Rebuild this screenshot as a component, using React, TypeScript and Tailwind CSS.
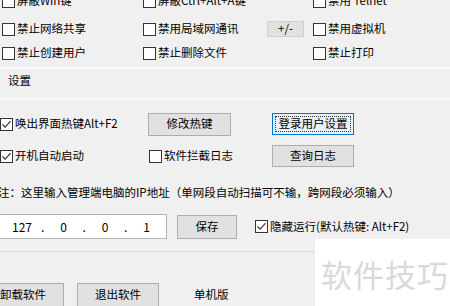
import React from "react";

function Box({ checked }: { checked?: boolean }) {
  return (
    <span className="w-[13px] h-[13px] shrink-0 border border-[#333] bg-white flex items-center justify-center">
      {checked && (
        <svg width="11" height="11" viewBox="0 0 11 11">
          <path d="M1.5 5.5 L4.2 8.2 L9.5 2.2" fill="none" stroke="#333" strokeWidth="1.2" />
        </svg>
      )}
    </span>
  );
}

function Check({ label, checked, className = "" }: { label: string; checked?: boolean; className?: string }) {
  return (
    <div className={"flex items-center gap-[2px] whitespace-nowrap " + className}>
      <Box checked={checked} />
      <span>{label}</span>
    </div>
  );
}

function Btn({ label, className = "" }: { label: string; className?: string }) {
  return (
    <div className={"flex items-center justify-center bg-[#e1e1e1] border border-[#adadad] shrink-0 " + className}>
      {label}
    </div>
  );
}

export default function App() {
  return (
    <div
      className="relative w-[450px] h-[306px] overflow-hidden bg-[#f0f0f0] text-black text-[11.5px] leading-none"
      style={{ fontFamily: '"Noto Sans CJK SC", "Noto Sans", sans-serif' }}
    >
      {/* 选项 */}
      <div className="flex h-[24px] items-center mt-[-11px] pl-[2px]">
        <Check label="屏蔽Win键" className="w-[141px]" />
        <Check label="屏蔽Ctrl+Alt+A键" className="w-[170px]" />
        <Check label="禁用 Telnet" />
      </div>
      <div className="flex h-[24px] items-center mt-[4px] pl-[2px]">
        <Check label="禁止网络共享" className="w-[141px]" />
        <Check label="禁用局域网通讯" className="w-[124px]" />
        <Btn label="+/-" className="w-[37px] h-[16px] border-[#d0d0d0]" />
        <Check label="禁用虚拟机" className="ml-[9px]" />
      </div>
      <div className="flex h-[24px] items-center pl-[2px]">
        <Check label="禁止创建用户" className="w-[141px]" />
        <Check label="禁止删除文件" className="w-[170px]" />
        <Check label="禁止打印" />
      </div>
      <div className="mt-[2px] h-[2px] bg-[#fafafa]" />

      {/* 设置 */}
      <div className="h-[24px] flex items-center pl-[8px]">设置</div>
      <div className="mt-[5px] h-[2px] bg-[#fafafa]" />

      <div className="flex h-[24px] items-center mt-[12px]">
        <Check label="唤出界面热键Alt+F2" checked className="w-[148px]" />
        <Btn label="修改热键" className="w-[83px] h-[23px]" />
        <div className="ml-[41px] w-[82px] h-[22px] border border-[#0078d7] bg-[#e5f1fb] p-[2px]">
          <div className="w-full h-full border border-dotted border-[#333] flex items-center justify-center">
            登录用户设置
          </div>
        </div>
      </div>
      <div className="flex h-[24px] items-center mt-[8px]">
        <Check label="开机自动启动" checked className="w-[149px]" />
        <Check label="软件拦截日志" className="w-[123px]" />
        <Btn label="查询日志" className="w-[82px] h-[22px]" />
      </div>

      <div className="h-[24px] flex items-center mt-[13px] ml-[-2px] whitespace-nowrap">
        注：这里输入管理端电脑的IP地址（单网段自动扫描可不输，跨网段必须输入）
      </div>

      <div className="flex h-[25px] items-center mt-[9px]">
        <div className="ml-[-1px] w-[168px] h-[25px] bg-white border border-[#b5b5b5] flex items-center pl-[7px] text-[12px]">
          <span className="w-[30px] text-center">127</span>
          <span className="w-[11.5px] text-center">.</span>
          <span className="w-[30px] text-center">0</span>
          <span className="w-[11.5px] text-center">.</span>
          <span className="w-[30px] text-center">0</span>
          <span className="w-[11.5px] text-center">.</span>
          <span className="w-[30px] text-center">1</span>
        </div>
        <Btn label="保存" className="ml-[10px] w-[60px] h-[24px]" />
        <Check label="隐藏运行(默认热键: Alt+F2)" checked className="ml-[18px]" />
      </div>

      <div className="mt-[12px] h-px bg-[#dcdcdc]" />

      <div className="flex h-[24px] items-center mt-[31px]">
        <Btn label="卸载软件" className="ml-[-18px] w-[82px] h-[24px]" />
        <Btn label="退出软件" className="ml-[13px] w-[82px] h-[24px]" />
        <span className="ml-[35px]">单机版</span>
      </div>

      {/* 水印 */}
      <div className="absolute left-[315px] top-[239px] right-0 bottom-0 bg-white flex items-center pl-[6px] pt-[2px]">
        <span className="text-[31px] text-[#d9d9d9] tracking-[1px] leading-none">软件技巧</span>
      </div>
    </div>
  );
}
